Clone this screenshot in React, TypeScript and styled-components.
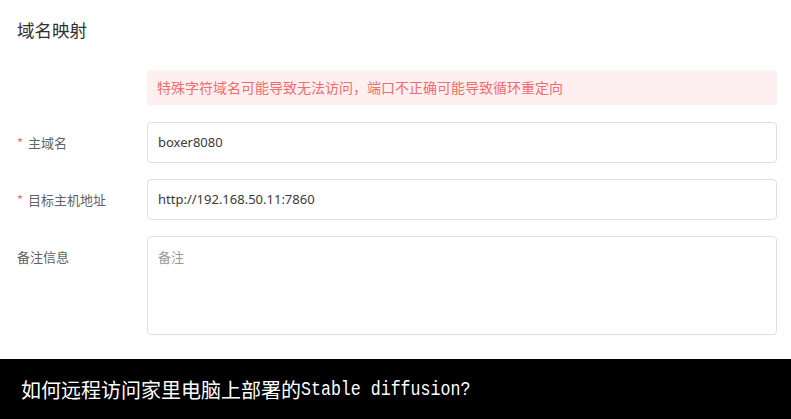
import styled, { createGlobalStyle } from "styled-components";

const GlobalStyle = createGlobalStyle`
  html, body {
    margin: 0;
    padding: 0;
    background: #ffffff;
  }
  body {
    font-family: "Noto Sans", "Noto Sans CJK SC", sans-serif;
  }
`;

const Page = styled.div`
  width: 791px;
  height: 419px;
  display: flex;
  flex-direction: column;
  overflow: hidden;
`;

const Panel = styled.div`
  flex: 1;
  padding: 18px 14px 0 17px;
  display: flex;
  flex-direction: column;
`;

const Title = styled.h2`
  margin: 0;
  font-size: 17.5px;
  line-height: 24px;
  font-weight: 400;
  color: #303133;
  font-family: "Noto Sans CJK SC", sans-serif;
`;

const Form = styled.div`
  margin-top: 28px;
  display: flex;
  flex-direction: column;
  gap: 16px;
`;

const Row = styled.div<{ tight?: boolean }>`
  display: grid;
  grid-template-columns: 130px 1fr;
  align-items: start;
  margin-top: ${(p) => (p.tight ? "0" : "1px")};
`;

const Label = styled.div`
  font-size: 13px;
  line-height: 41px;
  color: #606266;
  font-family: "Noto Sans CJK SC", sans-serif;
`;

const Star = styled.span`
  color: #f56c6c;
  margin-right: 5px;
`;

const Alert = styled.div`
  height: 35px;
  box-sizing: border-box;
  background: #fef0f0;
  color: #f56c6c;
  font-size: 14px;
  line-height: 35px;
  padding-left: 10px;
  border-radius: 2px;
  font-family: "Noto Sans CJK SC", sans-serif;
`;

const Input = styled.div`
  height: 41px;
  box-sizing: border-box;
  border: 1px solid #dcdfe6;
  border-radius: 4px;
  padding: 0 10px;
  font-size: 13px;
  line-height: 39px;
  color: #3a3a3a;
`;

const TextArea = styled.div`
  height: 99px;
  box-sizing: border-box;
  border: 1px solid #dcdfe6;
  border-radius: 4px;
  padding: 10px 10px;
  font-size: 13px;
  line-height: 20px;
  color: #999999;
  font-family: "Noto Sans CJK SC", sans-serif;
`;

const Caption = styled.div`
  height: 60px;
  background: #000000;
  color: #ffffff;
  display: flex;
  align-items: center;
  padding-left: 21px;
  font-size: 20px;
  font-family: "Noto Sans CJK SC", sans-serif;
  white-space: nowrap;
`;

const Mono = styled.span`
  display: inline-block;
  font-family: "Liberation Mono", monospace;
  font-size: 20px;
  transform: scaleX(0.83);
  transform-origin: left center;
`;

function App() {
  return (
    <Page>
      <GlobalStyle />
      <Panel>
        <Title>域名映射</Title>
        <Form>
          <Row tight>
            <span />
            <Alert>特殊字符域名可能导致无法访问，端口不正确可能导致循环重定向</Alert>
          </Row>
          <Row>
            <Label>
              <Star>*</Star>主域名
            </Label>
            <Input>boxer8080</Input>
          </Row>
          <Row tight>
            <Label>
              <Star>*</Star>目标主机地址
            </Label>
            <Input>http://192.168.50.11:7860</Input>
          </Row>
          <Row tight>
            <Label>备注信息</Label>
            <TextArea>备注</TextArea>
          </Row>
        </Form>
      </Panel>
      <Caption>
        如何远程访问家里电脑上部署的<Mono>Stable diffusion?</Mono>
      </Caption>
    </Page>
  );
}

export default App;
